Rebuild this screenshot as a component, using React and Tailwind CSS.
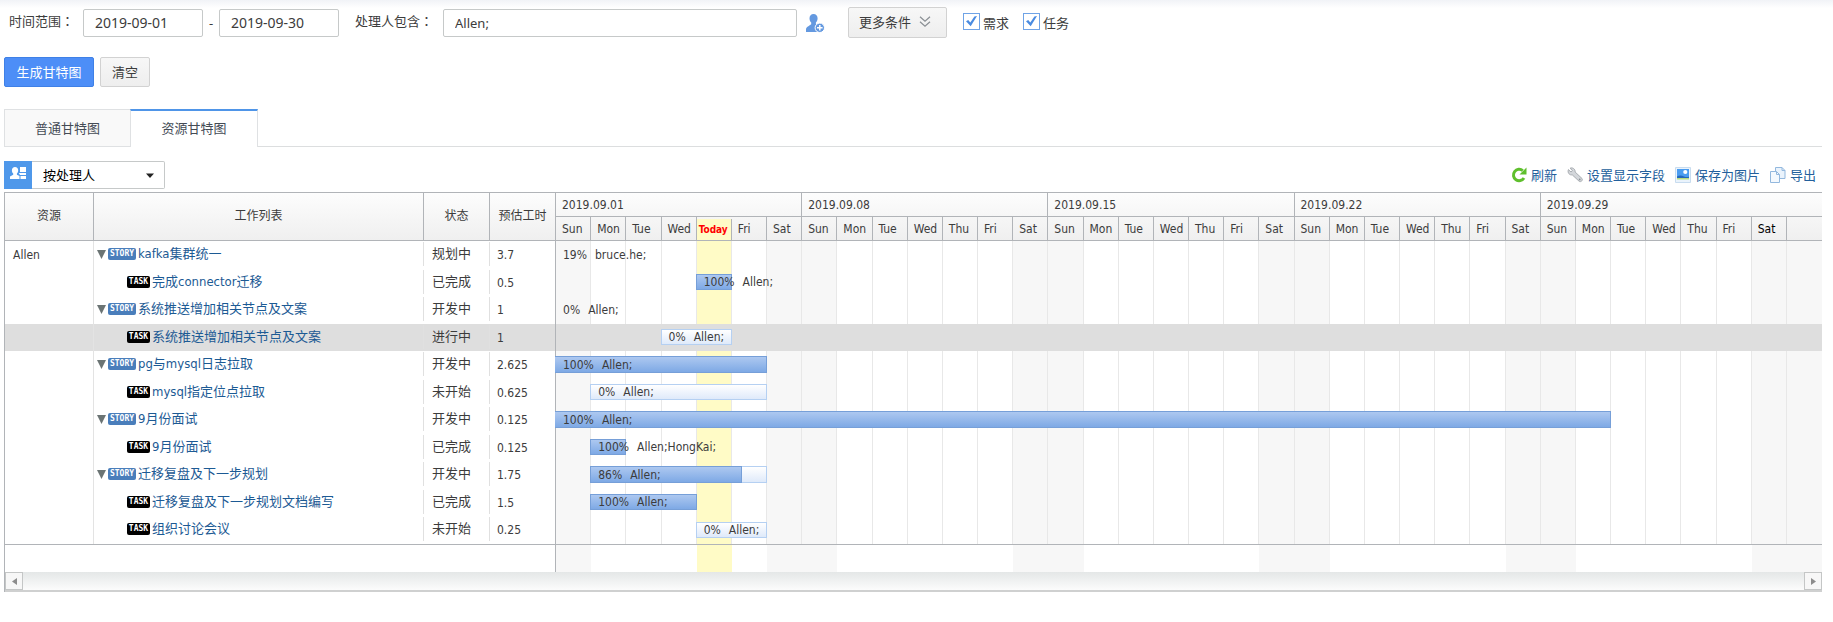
import React from "react";

const WEEKS = ["2019.09.01", "2019.09.08", "2019.09.15", "2019.09.22", "2019.09.29"];
const DAYS = ["Sun", "Mon", "Tue", "Wed", "Thu", "Fri", "Sat"];
const TODAY = 4;
const COLUMNS = Array.from({ length: 36 }, (_, i) => i);

const ROWS = [
  { kind: "story", name: "kafka集群统一", status: "规划中", hours: "3.7", start: 0, span: 0, pct: 19, who: "bruce.he;" },
  { kind: "task", name: "完成connector迁移", status: "已完成", hours: "0.5", start: 4, span: 1, pct: 100, who: "Allen;" },
  { kind: "story", name: "系统推送增加相关节点及文案", status: "开发中", hours: "1", start: 0, span: 0, pct: 0, who: "Allen;" },
  { kind: "task", name: "系统推送增加相关节点及文案", status: "进行中", hours: "1", start: 3, span: 2, pct: 0, who: "Allen;", selected: true },
  { kind: "story", name: "pg与mysql日志拉取", status: "开发中", hours: "2.625", start: 0, span: 6, pct: 100, who: "Allen;" },
  { kind: "task", name: "mysql指定位点拉取", status: "未开始", hours: "0.625", start: 1, span: 5, pct: 0, who: "Allen;" },
  { kind: "story", name: "9月份面试", status: "开发中", hours: "0.125", start: 0, span: 30, pct: 100, who: "Allen;" },
  { kind: "task", name: "9月份面试", status: "已完成", hours: "0.125", start: 1, span: 1, pct: 100, who: "Allen;HongKai;" },
  { kind: "story", name: "迁移复盘及下一步规划", status: "开发中", hours: "1.75", start: 1, span: 5, pct: 86, who: "Allen;" },
  { kind: "task", name: "迁移复盘及下一步规划文档编写", status: "已完成", hours: "1.5", start: 1, span: 3, pct: 100, who: "Allen;" },
  { kind: "task", name: "组织讨论会议", status: "未开始", hours: "0.25", start: 4, span: 2, pct: 0, who: "Allen;" },
];

function shade(i) {
  if (i === TODAY) return "bg-[#fffbc6]";
  return i % 7 === 0 || i % 7 === 6 ? "bg-[#f7f7f7]" : "bg-white";
}

function DayStripes({ lines }) {
  return (
    <div className="absolute inset-0 grid grid-cols-36">
      {COLUMNS.map((i) => (
        <div key={i} className={shade(i) + (lines && i < 35 ? " border-r border-[#e8e8e8]" : "")} />
      ))}
    </div>
  );
}

function Bar({ row }) {
  const height = row.kind === "story" ? "h-[17px] " : "h-4 ";
  const label = (
    <span className="relative flex h-full items-center gap-2 whitespace-nowrap pl-[7px]">
      <span>{row.pct}%</span>
      <span>{row.who}</span>
    </span>
  );
  if (!row.span) {
    return (
      <div className={height} style={{ gridColumn: "1 / span 6" }}>
        {label}
      </div>
    );
  }
  return (
    <div
      className={
        height +
        "relative border border-[#b5d0f2] bg-linear-to-b from-white to-[#dfeafa] " +
        (row.start ? "-ml-px" : "border-l-0")
      }
      style={{ gridColumn: `${row.start + 1} / span ${row.span}` }}
    >
      {row.pct > 0 && (
        <div className="absolute -inset-px">
          <div
            className={
              "h-full border border-[#769fd8] bg-linear-to-b from-[#adc8f0] to-[#7ea9e5] " +
              (row.start ? "" : "border-l-0")
            }
            style={{ width: `${row.pct}%` }}
          />
        </div>
      )}
      {label}
    </div>
  );
}

function Badge({ kind }) {
  return (
    <span
      className={
        "flex h-3 shrink-0 items-center justify-center rounded-[2px] font-['DejaVu_Sans_Mono',monospace] text-[8px] font-bold leading-none text-white " +
        (kind === "story" ? "w-7 bg-[#4a7ebb]" : "w-[23px] bg-black")
      }
    >
      {kind === "story" ? "STORY" : "TASK"}
    </span>
  );
}

function Colon() {
  return <span className="font-['Noto_Sans_CJK_TC',sans-serif]">：</span>;
}

function Check({ id, label }) {
  return (
    <div className="flex gap-[3px]">
      <span className="relative flex self-start">
        <input id={id} type="checkbox" defaultChecked className="size-[17px] appearance-none border border-[#6fa3e6] bg-white" />
        <svg viewBox="0 0 17 17" className="pointer-events-none absolute inset-0 size-[17px]" fill="#4a8be0">
          <path d="M3 8.300 5.200 7 7.300 9.500 11.400 3.400 14 3 7.700 13.200Z" />
        </svg>
      </span>
      <label htmlFor={id}>{label}</label>
    </div>
  );
}

const TOOLS = [
  {
    label: "刷新",
    icon: (
      <>
        <path d="M13 11A5.700 5.700 0 1 1 11.800 3.600" fill="none" stroke="#5fbf2d" strokeWidth="3" />
        <path d="M15.500.5v7H8.500Z" fill="#5fbf2d" />
      </>
    ),
  },
  {
    label: "设置显示字段",
    icon: (
      <>
        <path
          d="M1.400 2.600 4 5 5.400 3.700 3.200 1.100C5.600.3 8.400 1.900 8.100 5L15 11.500c1.200 1.500-.9 4-2.800 2.800L5.200 7.800C2.800 8.500.2 6 1.400 2.600Z"
          fill="#d3d6da"
          stroke="#a9adb2"
        />
        <circle cx="12.700" cy="12.400" r=".9" fill="#8d9399" />
      </>
    ),
  },
  {
    label: "保存为图片",
    icon: (
      <>
        <path d="M.5.500h15v15H.5Z" fill="#eaf3fc" stroke="#c8dcef" />
        <path d="M2 2h12v8.500H2Z" fill="#4a9cf0" />
        <path d="M2 9.500C4.500 8 7 8.500 9 9.500s3.500.5 5 .2V11H2Z" fill="#2567bd" />
        <path d="M2 11h12v1.500H2Z" fill="#b9dc7c" />
        <circle cx="10.300" cy="5" r="2.100" fill="#fff" />
      </>
    ),
  },
  {
    label: "导出",
    icon: (
      <>
        <path d="M5.500.5h6.500l3 3v8h-9.500Z" fill="#eaf3fc" stroke="#93b8de" />
        <path d="M12 .5v3h3" fill="none" stroke="#93b8de" />
        <path d="M.5 4.500h6l3 3v8h-9Z" fill="#f4f9fe" stroke="#93b8de" />
        <path d="M6.500 4.500v3h3" fill="none" stroke="#93b8de" />
      </>
    ),
  },
];

function Tool({ label, icon }) {
  return (
    <a href="#" className="flex items-center gap-1 text-[#23609c]">
      <svg viewBox="0 0 16 16" className="size-4">{icon}</svg>
      {label}
    </a>
  );
}

const field = "h-7 rounded-[2px] border border-[#c6c9c9] bg-white";
const greyButton = "rounded-[2px] border border-[#d2d2d2] bg-linear-to-b from-[#f7f7f7] to-[#eeeeee]";

export default function App() {
  return (
    <div className="bg-linear-to-b from-[#f1f3f7] to-white to-[8px] pl-1 pr-[11px] pt-[7px] font-['Noto_Sans','Noto_Sans_CJK_SC',sans-serif] text-[13px] leading-5 text-[#3c3c3c]">
      <form className="flex items-center" onSubmit={(e) => e.preventDefault()}>
        <label htmlFor="from" className="w-[79px] pb-1 pl-[5px]">时间范围<Colon /></label>
        <input id="from" defaultValue="2019-09-01" className={field + " w-[120px] px-[11px] text-sm"} />
        <span className="w-4 text-center">-</span>
        <input aria-label="结束日期" defaultValue="2019-09-30" className={field + " w-[120px] px-[11px] text-sm"} />
        <label htmlFor="owner" className="w-[104px] pb-1 pl-4">处理人包含<Colon /></label>
        <input id="owner" defaultValue="Allen;" className={field + " w-[354px] px-[11px] text-[13px]"} />
        <button type="button" aria-label="选择处理人" className="ml-2 mr-[23px]">
          <svg viewBox="0 0 20 20" className="size-5" fill="#6499e0">
            <path d="M8.500 1C11 1 12.600 2.800 12.600 5.300c0 1.700-.7 3.300-1.700 4.300v1.600c1 .6 2 .9 3 1.400V19H1v-2.500c0-2.600 3.500-3.600 5.200-5.200V9.600C5.100 8.600 4.500 7 4.500 5.300 4.500 2.800 6.100 1 8.500 1Z" />
            <circle cx="14.800" cy="14.800" r="4.700" stroke="#fff" />
            <path d="M14.800 12v5.600M12 14.800h5.600" stroke="#fff" strokeWidth="1.500" />
          </svg>
        </button>
        <button type="button" className={greyButton + " flex h-[31px] w-[99px] items-center gap-2 pb-0.5 pl-2.5"}>
          更多条件
          <svg viewBox="0 0 12 12" className="size-3" fill="none" stroke="#8a8f94" strokeWidth="1.200">
            <path d="M1 .8 6 5.300 11 .8M1 5.800l5 4.500 5-4.500" />
          </svg>
        </button>
        <div className="flex gap-[14px] pl-4">
          <Check id="need" label="需求" />
          <Check id="work" label="任务" />
        </div>
      </form>

      <div className="mt-[19px] flex gap-1.5">
        <button className="h-[30px] w-[90px] rounded-[2px] border border-[#3f80e6] bg-[#4d8ef7] text-white">生成甘特图</button>
        <button className={greyButton + " h-[30px] w-[50px]"}>清空</button>
      </div>

      <div role="tablist" className="mt-[22px] flex h-[38px] text-[#444b55]">
        <button role="tab" className="w-[126px] border border-r-0 border-[#dfe1e3] bg-[#f9f9f9]">普通甘特图</button>
        <button role="tab" aria-selected="true" className="w-32 border-x border-t-2 border-x-[#dfe1e3] border-t-[#4f95e8] bg-white pb-0.5">
          资源甘特图
        </button>
        <div className="flex-1 border-b border-[#dcdedf]" />
      </div>

      <div className="mt-3.5 flex h-[31px] items-start justify-between">
        <div className="flex">
          <span className="flex h-7 w-7 items-center justify-center bg-[#4f98ea] pb-1">
            <svg viewBox="0 0 16 13" className="h-[13px] w-4" fill="#fff">
              <path d="M5 0c2 0 3.200 1.300 3.200 3.200 0 1.500-.6 2.600-1.300 3.300v1.200L9.500 9v3H0V9.400l3.200-1.600V6.500C2.400 5.800 1.900 4.700 1.900 3.200 1.900 1.300 3.100 0 5 0ZM10 0h6v5h-6ZM8.800 6H16v2H10ZM10.500 9H16v3h-5.500Z" />
            </svg>
          </span>
          <span className="relative">
            <select aria-label="分组方式" className={field + " w-[133px] appearance-none rounded-l-none border-l-0 px-[11px] text-black"}>
              <option>按处理人</option>
            </select>
            <svg viewBox="0 0 8 5" className="pointer-events-none absolute right-[11px] top-3 h-[5px] w-2" fill="#222">
              <path d="M0 .5h8L4 5Z" />
            </svg>
          </span>
        </div>
        <nav className="flex h-7 items-center gap-2.5 pr-1.5">
          {TOOLS.map((t) => (
            <Tool key={t.label} {...t} />
          ))}
        </nav>
      </div>

      <div className="border-l border-t border-[#b1b4b8] font-['DejaVu_Sans_Condensed','Noto_Sans_CJK_SC',sans-serif] text-xs leading-4">
        <table className="w-full table-fixed border-separate border-spacing-0">
          <colgroup>
            <col className="w-[89px]" />
            <col className="w-[330px]" />
            <col className="w-[66px]" />
            <col className="w-[66px]" />
            <col />
          </colgroup>
          <thead>
            <tr className="h-12 bg-linear-to-b from-[#fdfdfd] to-[#efefef]">
              {["资源", "工作列表", "状态", "预估工时"].map((h) => (
                <th key={h} className="border-b border-r border-[#b1b4b8] p-0 pb-0.5 font-normal">{h}</th>
              ))}
              <th className="border-b border-[#b1b4b8] p-0 text-left font-normal">
                <div className="grid h-6 grid-cols-36 border-b border-[#b1b4b8]">
                  {WEEKS.map((w, i) => (
                    <div key={w} className={"col-span-7 flex items-center pl-1.5 " + (i < 4 ? "border-r border-[#b1b4b8]" : "")}>
                      {w}
                    </div>
                  ))}
                </div>
                <div className="grid h-[23px] grid-cols-36">
                  {COLUMNS.slice(0, 35).map((i) =>
                    i === TODAY ? (
                      <div key={i} className="mt-0.5 flex items-center border-r border-[#b1b4b8] bg-[#fffbc6] pl-0.5 text-[10px] font-bold text-[#f00]">
                        Today
                      </div>
                    ) : (
                      <div key={i} className={"flex items-center border-r border-[#b1b4b8] pl-1.5 " + (i === 34 ? "text-black" : "")}>
                        {DAYS[i % 7]}
                      </div>
                    )
                  )}
                </div>
              </th>
            </tr>
          </thead>
          <tbody>
            {ROWS.map((row, i) => (
              <tr key={i} className={(i % 2 ? "h-[27px] " : "h-7 ") + (row.selected ? "bg-[#dedede]" : "")}>
                <td className="border-r border-[#e3e3e3] py-0 pl-2">{i === 0 ? "Allen" : ""}</td>
                <td className="p-0 pb-0.5">
                  <div className={"flex h-6 items-center border-r border-[#e0e0e0] text-[13px] " + (row.kind === "story" ? "pl-[3px]" : "pl-[33px]")}>
                    {row.kind === "story" && (
                      <svg viewBox="0 0 9 9" className="mr-0.5 size-[9px]" fill="#6b7474">
                        <path d="M0 0h9L4.500 9Z" />
                      </svg>
                    )}
                    <Badge kind={row.kind} />
                    <a href="#" className="pl-0.5 text-[#1c5a94]">{row.name}</a>
                  </div>
                </td>
                <td className="p-0 pb-0.5">
                  <div className="flex h-6 items-center border-r border-[#e0e0e0] pl-2 text-[13px]">{row.status}</div>
                </td>
                <td className="border-r border-[#b1b4b8] py-0 pl-[7px]">{row.hours}</td>
                <td className="relative p-0 pb-px">
                  {!row.selected && <DayStripes lines />}
                  <div className="relative grid grid-cols-36 items-center">
                    <Bar row={row} />
                  </div>
                </td>
              </tr>
            ))}
          </tbody>
          <tfoot>
            <tr className="h-7">
              <td colSpan={4} className="border-r border-t border-[#b1b4b8] p-0" />
              <td className="relative border-t border-[#b1b4b8] p-0">
                <DayStripes />
              </td>
            </tr>
          </tfoot>
        </table>
        <div className="flex h-5 justify-between border-b-2 border-[#cfd0d0] bg-linear-to-b from-[#e4e7e7] to-[#fcfcfc]">
          <button aria-label="向左滚动" className="flex w-[18px] items-center justify-center border border-[#c4c6c6] bg-[#f7f7f7]">
            <svg viewBox="0 0 5 7" className="h-[7px] w-[5px]" fill="#8c8c8c"><path d="M5 0v7L0 3.500Z" /></svg>
          </button>
          <button aria-label="向右滚动" className="flex w-[18px] items-center justify-center border border-[#c4c6c6] bg-[#f7f7f7]">
            <svg viewBox="0 0 5 7" className="h-[7px] w-[5px]" fill="#8c8c8c"><path d="M0 0v7l5-3.500Z" /></svg>
          </button>
        </div>
      </div>
    </div>
  );
}
